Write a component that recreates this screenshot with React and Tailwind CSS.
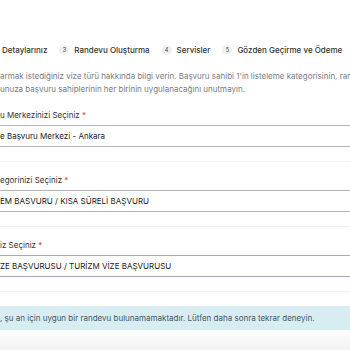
export default function App() {
  const steps = [
    { n: 3, label: "Randevu Oluşturma" },
    { n: 4, label: "Servisler" },
    { n: 5, label: "Gözden Geçirme ve Ödeme" },
  ];

  const fields = [
    { label: "u Merkezinizi Seçiniz", value: "e Başvuru Merkezi - Ankara", border: "border-[#b3b3ba]" },
    { label: "egorinizi Seçiniz", value: "EM BASVURU / KISA SÜRELİ BAŞVURU", border: "border-[#b3b3ba]" },
    { label: "iz Seçiniz", value: "ZE BAŞVURUSU / TURİZM VİZE BAŞVURUSU", border: "border-[#a3a8bd]" },
  ];

  return (
    <div className="w-[350px] h-[350px] overflow-hidden bg-white font-['Inter',sans-serif] whitespace-nowrap">
      <div className="w-[420px] pt-[44px]">
        {/* Stepper */}
        <div className="flex items-center h-[12px] text-[8px] font-medium text-[#333] pl-[2px]">
          <span>Detaylarınız</span>
          {steps.map((s) => (
            <div key={s.n} className="flex items-center ml-[12px]">
              <span className="w-[10px] h-[10px] rounded-full bg-[#efefef] grid place-items-center text-[5.5px] text-[#555]">
                {s.n}
              </span>
              <span className="ml-[5px]">{s.label}</span>
            </div>
          ))}
        </div>

        {/* Description */}
        <div className="mt-[14px] text-[8px] leading-[13px] text-[#7b7b82]">
          <p>armak istediğiniz vize türü hakkında bilgi verin. Başvuru sahibi 1'in listeleme kategorisinin, randevu</p>
          <p>unuza başvuru sahiplerinin her birinin uygulanacağını unutmayın.</p>
        </div>

        {/* Fields */}
        <div className="mt-[13px]">
          {fields.map((f, i) => (
            <div key={i} className={`border-b border-[#f1f1f3] ${i === 0 ? "" : "pt-[12px]"} pb-[14px]`}>
              <div className="text-[8px] leading-[12px] text-[#333]">
                {f.label} <span className="text-[#d9342b]">*</span>
              </div>
              <div className={`mt-[4px] h-[22px] border-y ${f.border} bg-white flex items-center text-[8px] text-[#222]`}>
                {f.value}
              </div>
            </div>
          ))}
        </div>

        {/* Alert */}
        <div className="mt-[14px] h-[24px] bg-[#d8edf2] flex items-center text-[8px] text-[#3d5963]">
          , şu an için uygun bir randevu bulunamamaktadır. Lütfen daha sonra tekrar deneyin.
        </div>
        <div className="h-[20px] bg-gradient-to-b from-white to-[#f1f1f1]"></div>
      </div>
    </div>
  );
}
